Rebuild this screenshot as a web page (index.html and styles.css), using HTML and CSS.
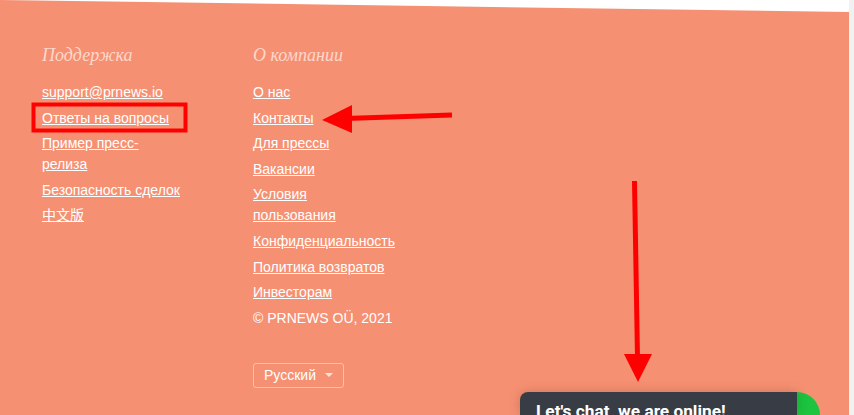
FILE: index.html
```html
<!DOCTYPE html>
<html lang="ru">
<head>
    <meta charset="UTF-8">
    <meta name="viewport" content="width=device-width, initial-scale=1.0">
    <title>PRNEWS footer</title>
    <link rel="stylesheet" href="styles.css">
</head>
<body>
    <div class="page">
        <footer class="footer">
            <div class="footer-col col-support">
                <h3>Поддержка</h3>
                <ul>
                    <li><a href="#">support@prnews.io</a></li>
                    <li><a href="#">Ответы на вопросы</a></li>
                    <li><a href="#">Пример пресс-релиза</a></li>
                    <li><a href="#">Безопасность сделок</a></li>
                    <li><a href="#">中文版</a></li>
                </ul>
            </div>

            <div class="footer-col col-company">
                <h3>О компании</h3>
                <ul>
                    <li><a href="#">О нас</a></li>
                    <li><a href="#">Контакты</a></li>
                    <li><a href="#">Для прессы</a></li>
                    <li><a href="#">Вакансии</a></li>
                    <li><a href="#">Условия пользования</a></li>
                    <li><a href="#">Конфиденциальность</a></li>
                    <li><a href="#">Политика возвратов</a></li>
                    <li><a href="#">Инвесторам</a></li>
                    <li class="copyright">© PRNEWS OÜ, 2021</li>
                </ul>

                <!-- Language switcher -->
                <button class="lang-select">Русский <span class="caret"></span></button>
            </div>
        </footer>
        <div class="scrollbar"></div>
    </div>

    <!-- Annotation marks drawn over the screenshot -->
    <svg class="annotations" width="854" height="415" viewBox="0 0 854 415">
        <rect x="33.5" y="104.5" width="152" height="26" fill="none" stroke="#ff0000" stroke-width="4"/>
        <line x1="452" y1="115" x2="345" y2="118.5" stroke="#ff0000" stroke-width="5"/>
        <polygon points="322,120 352,105 352,133" fill="#ff0000"/>
        <line x1="634.5" y1="181" x2="637.5" y2="358" stroke="#ff0000" stroke-width="5"/>
        <polygon points="624,354 652,354 638,382" fill="#ff0000"/>
    </svg>

    <!-- Live chat widget -->
    <div class="chat-widget">
        <span class="chat-dot"></span>
        <div class="chat-box">Let's chat, we are online!</div>
    </div>
</body>
</html>
```

FILE: styles.css
```css
body {
    margin: 0;
    background: #ffffff;
    font-family: "Liberation Sans", Arial, "Noto Sans CJK SC", sans-serif;
    overflow: hidden;
}

.page {
    display: flex;
    height: 415px;
}

.footer {
    flex: 1;
    display: flex;
    background-color: #f69072;
    clip-path: polygon(0 0, 100% 12px, 100% 100%, 0 100%);
    padding: 44px 0 0 42px;
}

.scrollbar {
    width: 5px;
    background: #f1f1f1;
}

.footer-col h3 {
    margin: 0 0 16px;
    font-family: "Liberation Serif", "Times New Roman", serif;
    font-style: italic;
    font-weight: normal;
    font-size: 18px;
    line-height: 22px;
    color: #fdd8cb;
}

.col-support {
    width: 140px;
    margin-right: 71px;
}

.col-company {
    width: 136px;
}

.footer-col ul {
    list-style: none;
    margin: 0;
    padding: 0;
}

.footer-col li {
    font-size: 14px;
    line-height: 21px;
    margin-bottom: 4.6px;
    color: #ffffff;
}

.footer-col a {
    color: #ffffff;
    text-decoration: underline;
}

.copyright {
    white-space: nowrap;
}

.lang-select {
    margin-top: 34px;
    display: flex;
    align-items: center;
    gap: 9px;
    height: 25px;
    padding: 0 10px;
    background: transparent;
    border: 1px solid #fbc0ac;
    border-radius: 3px;
    color: #ffffff;
    font-family: "Liberation Sans", Arial, sans-serif;
    font-size: 14px;
}

.caret {
    width: 0;
    height: 0;
    border-left: 4px solid transparent;
    border-right: 4px solid transparent;
    border-top: 4px solid #fde3da;
}

/* Overlay layers */
.annotations {
    position: absolute;
    left: 0;
    top: 0;
    pointer-events: none;
}

.chat-widget {
    position: absolute;
    left: 520px;
    top: 392px;
    width: 277px;
    height: 23px;
}

.chat-box {
    position: relative;
    height: 23px;
    background: #373c45;
    border-radius: 8px 0 0 0;
    box-shadow: 0 0 12px rgba(0, 0, 0, 0.18);
    color: #ffffff;
    font-family: Roboto, "Liberation Sans", sans-serif;
    font-size: 17.3px;
    font-weight: bold;
    line-height: 20px;
    padding: 9px 16px 0;
    box-sizing: border-box;
    overflow: hidden;
    white-space: nowrap;
}

.chat-dot {
    position: absolute;
    right: -23px;
    top: 0;
    width: 46px;
    height: 23px;
    border-radius: 23px 23px 0 0;
    background: #1cc43f;
}
```
